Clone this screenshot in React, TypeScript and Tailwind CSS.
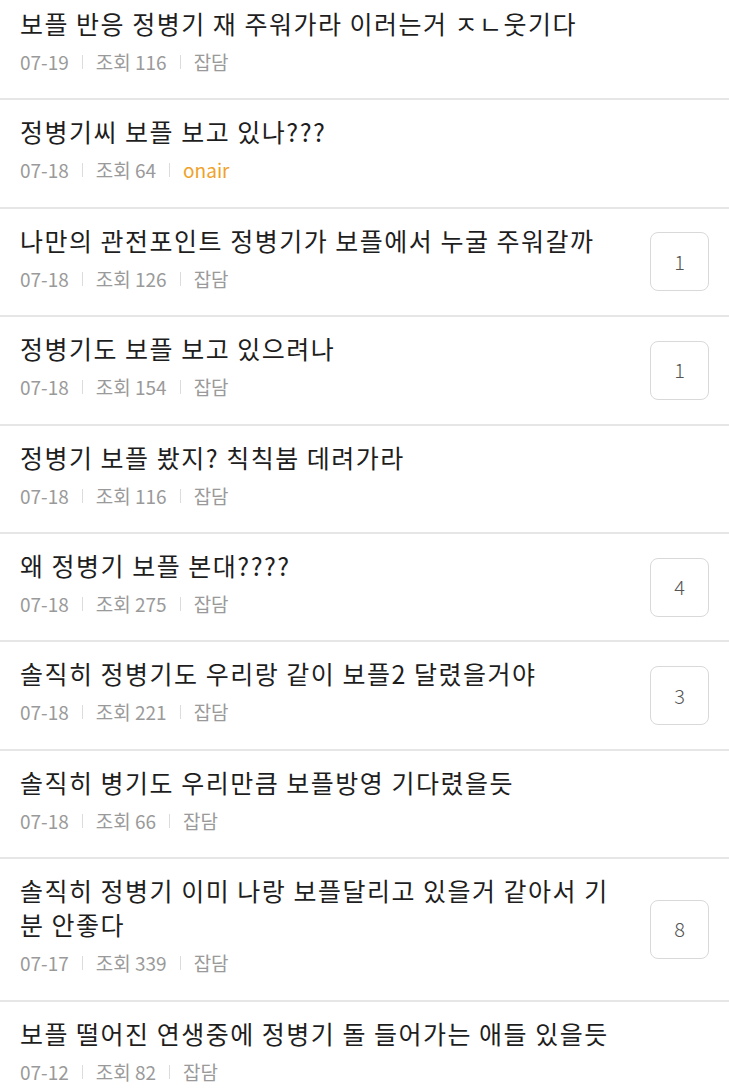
const posts = [
  { title: '보플 반응 정병기 재 주워가라 이러는거 ㅈㄴ웃기다', date: '07-19', views: 116, board: '잡담' },
  { title: '정병기씨 보플 보고 있나???', date: '07-18', views: 64, board: 'onair' },
  { title: '나만의 관전포인트 정병기가 보플에서 누굴 주워갈까', date: '07-18', views: 126, board: '잡담', comments: 1 },
  { title: '정병기도 보플 보고 있으려나', date: '07-18', views: 154, board: '잡담', comments: 1 },
  { title: '정병기 보플 봤지? 칙칙붐 데려가라', date: '07-18', views: 116, board: '잡담' },
  { title: '왜 정병기 보플 본대????', date: '07-18', views: 275, board: '잡담', comments: 4 },
  { title: '솔직히 정병기도 우리랑 같이 보플2 달렸을거야', date: '07-18', views: 221, board: '잡담', comments: 3 },
  { title: '솔직히 병기도 우리만큼 보플방영 기다렸을듯', date: '07-18', views: 66, board: '잡담' },
  { title: '솔직히 정병기 이미 나랑 보플달리고 있을거 같아서 기분 안좋다', date: '07-17', views: 339, board: '잡담', comments: 8 },
  { title: '보플 떨어진 연생중에 정병기 돌 들어가는 애들 있을듯', date: '07-12', views: 82, board: '잡담' },
];

const Sep = () => <span className="mx-[13px] inline-block h-[14px] w-px bg-[#dcdcdc]" />;

export default function App() {
  return (
    <div className="h-[1088px] overflow-hidden bg-white font-['Noto_Sans_CJK_KR',sans-serif]">
      <ul className="-mt-2">
        {posts.map((p, i) => (
          <li key={i} className="flex items-center border-b-2 border-[#e6e6e6] pl-5 pr-5">
            <div className="min-w-0 flex-1 pt-[14px] pb-[24.4px]">
              <p className="break-all pr-5 text-[25px] leading-[34px] tracking-[1.5px] text-[#1e1e1e]">{p.title}</p>
              <div className="mt-[10px] flex items-center text-[19px] leading-[24px] text-[#9a9a9a]">
                <span>{p.date}</span>
                <Sep />
                <span>조회 {p.views}</span>
                <Sep />
                <span className={p.board === 'onair' ? 'text-[#f0a12a]' : ''}>{p.board}</span>
              </div>
            </div>
            {p.comments ? (
              <div className="flex h-[59px] w-[59px] shrink-0 items-center justify-center rounded-lg border-[1.5px] border-[#d9d9d9] text-[20px] font-light text-[#555]">
                {p.comments}
              </div>
            ) : null}
          </li>
        ))}
      </ul>
    </div>
  );
}
